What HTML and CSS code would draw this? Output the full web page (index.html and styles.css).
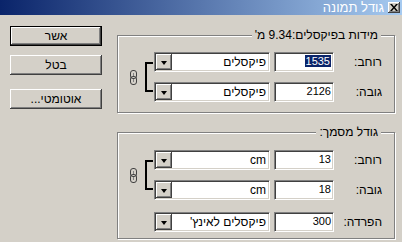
FILE: index.html
```html
<!DOCTYPE html>
<html lang="he">
<head>
    <meta charset="UTF-8">
    <title>גודל תמונה</title>
    <link rel="stylesheet" href="styles.css">
</head>
<body>
    <div class="window">
        <!-- כותרת החלון -->
        <div class="titlebar">
            <span class="title">גודל תמונה</span>
            <span class="close">
                <svg width="8" height="7" viewBox="0 0 8 7">
                    <path d="M0 0h2l2 2.5L6 0h2L5 3.5 8 7H6L4 4.5 2 7H0l3-3.5z" fill="#000"/>
                </svg>
            </span>
        </div>

        <div class="dialog">
            <div class="actions">
                <div class="btn btn-default">אשר</div>
                <div class="btn">בטל</div>
                <div class="btn btn-auto">אוטומטי...</div>
            </div>

            <div class="groups">
                <!-- מידות בפיקסלים -->
                <fieldset class="group group-pixels">
                    <legend>מידות בפיקסלים:9.34 מ'</legend>
                    <div class="linked">
                        <div class="rows">
                            <div class="row">
                                <span class="label">רוחב:</span>
                                <div class="field"><span class="selected">1535</span></div>
                                <div class="select"><span class="select-text">פיקסלים</span><span class="drop"><i></i></span></div>
                            </div>
                            <div class="row">
                                <span class="label">גובה:</span>
                                <div class="field">2126</div>
                                <div class="select"><span class="select-text">פיקסלים</span><span class="drop"><i></i></span></div>
                            </div>
                        </div>
                        <div class="bracket"></div>
                        <svg class="chain" width="7" height="15" viewBox="0 0 7 15">
                            <rect x="0.5" y="0.5" width="6" height="8" rx="2.5" fill="#d4d0c8" stroke="#404040"/>
                            <rect x="0.5" y="6.5" width="6" height="8" rx="2.5" fill="none" stroke="#404040"/>
                            <path d="M3.5 3v3M3.5 9v3" stroke="#808080"/>
                        </svg>
                    </div>
                </fieldset>

                <!-- גודל מסמך -->
                <fieldset class="group group-doc">
                    <legend>גודל מסמך:</legend>
                    <div class="linked">
                        <div class="rows">
                            <div class="row">
                                <span class="label">רוחב:</span>
                                <div class="field">13</div>
                                <div class="select"><span class="select-text">cm</span><span class="drop"><i></i></span></div>
                            </div>
                            <div class="row">
                                <span class="label">גובה:</span>
                                <div class="field">18</div>
                                <div class="select"><span class="select-text">cm</span><span class="drop"><i></i></span></div>
                            </div>
                        </div>
                        <div class="bracket"></div>
                        <svg class="chain" width="7" height="15" viewBox="0 0 7 15">
                            <rect x="0.5" y="0.5" width="6" height="8" rx="2.5" fill="#d4d0c8" stroke="#404040"/>
                            <rect x="0.5" y="6.5" width="6" height="8" rx="2.5" fill="none" stroke="#404040"/>
                            <path d="M3.5 3v3M3.5 9v3" stroke="#808080"/>
                        </svg>
                    </div>
                    <div class="row row-res">
                        <span class="label">הפרדה:</span>
                        <div class="field">300</div>
                        <div class="select"><span class="select-text">פיקסלים לאינץ'</span><span class="drop"><i></i></span></div>
                    </div>
                </fieldset>
            </div>
        </div>
    </div>
</body>
</html>
```

FILE: styles.css
```css
body {
    margin: 0;
    font-family: "Liberation Sans", Arial, sans-serif;
    font-size: 11px;
    color: #000;
    background-color: #d4d0c8;
}

.window {
    width: 402px;
    height: 242px;
    overflow: hidden;
    background-color: #d4d0c8;
}

/* כותרת */
.titlebar {
    height: 15px;
    display: flex;
    justify-content: flex-end;
    align-items: center;
    background: linear-gradient(to right, #0a246a, #a6caf0);
    padding-right: 2px;
}

.title {
    color: #fff;
    font-size: 13px;
    line-height: 15px;
    margin-right: 4px;
}

.close {
    width: 12px;
    height: 11px;
    box-sizing: border-box;
    background-color: #d4d0c8;
    display: flex;
    justify-content: center;
    align-items: center;
    box-shadow: inset -1px -1px #404040, inset 1px 1px #fff, inset -2px -2px #808080;
}

/* גוף הדיאלוג */
.dialog {
    display: flex;
    align-items: flex-start;
}

.actions {
    display: flex;
    flex-direction: column;
    margin-left: 10px;
    margin-top: 11px;
    width: 92px;
}

.btn {
    height: 20px;
    box-sizing: border-box;
    display: flex;
    justify-content: center;
    align-items: center;
    direction: rtl;
    font-size: 12px;
    background-color: #d4d0c8;
    box-shadow: inset -1px -1px #404040, inset 1px 1px #fff, inset -2px -2px #808080;
    margin-bottom: 9px;
}

.btn-default {
    border: 1px solid #000;
}

.btn-auto {
    margin-top: 5px;
}

.groups {
    margin-left: 15px;
    margin-top: 14px;
    width: 278px;
}

.group {
    direction: rtl;
    margin: 0;
    min-width: 0;
    padding: 10px 12px 10px 8px;
    border: 1px solid #808080;
    box-shadow: inset 1px 1px 0 #fff, 1px 1px 0 #fff;
}

.group legend {
    padding: 0 3px;
    margin-right: 1px;
    line-height: 13px;
    font-size: 12px;
    background-color: #d4d0c8;
}

.group-doc {
    margin-top: 13px;
    padding-top: 11px;
    padding-bottom: 6px;
}

.linked {
    display: flex;
    align-items: center;
}

.rows {
    display: flex;
    flex-direction: column;
    gap: 10px;
}

.row {
    display: flex;
    align-items: center;
    height: 20px;
}

.row-res {
    margin-top: 12px;
}

.label {
    width: 40px;
    margin-left: 8px;
    font-size: 12px;
}

.field {
    width: 60px;
    height: 20px;
    box-sizing: border-box;
    margin-left: 4px;
    padding-right: 2px;
    line-height: 16px;
    font-size: 11px;
    background-color: #fff;
    border: 1px solid;
    border-color: #808080 #fff #fff #808080;
    box-shadow: inset 1px 1px #404040, inset -1px -1px #d4d0c8;
}

.selected {
    background-color: #0a246a;
    color: #fff;
    padding: 0 1px;
}

.select {
    width: 116px;
    height: 20px;
    box-sizing: border-box;
    display: flex;
    align-items: center;
    justify-content: space-between;
    padding: 1px;
    font-size: 12px;
    background-color: #fff;
    border: 1px solid;
    border-color: #808080 #fff #fff #808080;
    box-shadow: inset 1px 1px #404040, inset -1px -1px #d4d0c8;
}

.select-text {
    padding-right: 2px;
    line-height: 16px;
}

.drop {
    width: 16px;
    height: 16px;
    box-sizing: border-box;
    background-color: #d4d0c8;
    display: flex;
    justify-content: center;
    align-items: center;
    box-shadow: inset -1px -1px #404040, inset 1px 1px #fff, inset -2px -2px #808080;
}

.drop i {
    width: 0;
    height: 0;
    border-left: 3px solid transparent;
    border-right: 3px solid transparent;
    border-top: 4px solid #000;
    margin-top: 1px;
}

.bracket {
    width: 8px;
    height: 30px;
    box-sizing: border-box;
    margin-right: 1px;
    border: 2px solid #000;
    border-right: none;
}

.chain {
    margin-right: 8px;
}
```
